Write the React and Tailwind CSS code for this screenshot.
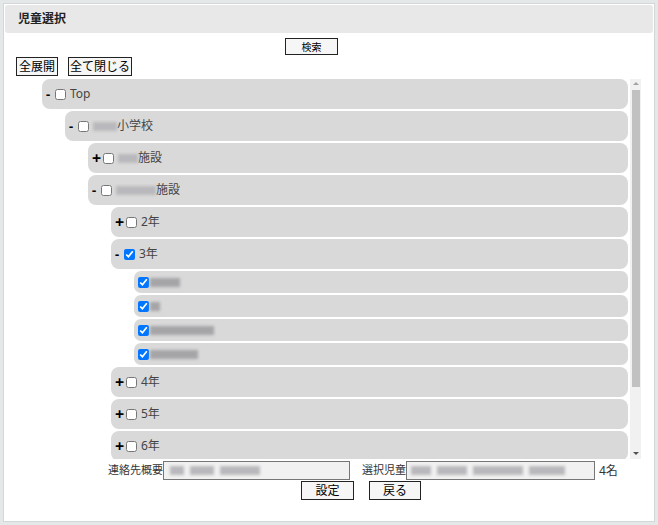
import React, { useState } from 'react'

const font = { fontFamily: '"Noto Sans", "Noto Sans CJK JP", sans-serif' }

// blurred name placeholder
const Blur = ({ w, dark }) => (
  <span className={`inline-block h-[9px] blur-[1.5px] ${dark ? 'bg-[#a5a5a8]' : 'bg-[#b9b9bd]'}`} style={{ width: w }} />
)

const tree = {
  label: 'Top', open: true, children: [
    { label: '小学校', blur: 24, open: true, children: [
      { label: '施設', blur: 20, open: false, children: [] },
      { label: '施設', blur: 40, open: true, children: [
        { label: '2年', open: false, children: [] },
        { label: '3年', open: true, checked: true, leaves: [30, 10, 64, 48] },
        { label: '4年', open: false, children: [] },
        { label: '5年', open: false, children: [] },
        { label: '6年', open: false, children: [] },
      ] },
    ] },
    { label: '中学校', blur: 24, open: false, children: [] },
    { label: '中学校', blur: 30, open: false, children: [] },
  ]
}

const Node = ({ node }) => {
  const [checked, setChecked] = useState(!!node.checked)
  return (
    <div>
      <div className="h-[30px] mb-[2px] bg-[#d9d9d9] rounded-[8px] flex items-center pl-[4px] text-[12px] text-[#444]">
        {node.open
          ? <span className="font-bold text-black text-[13px] w-[9px] leading-none">-</span>
          : <span className="font-bold text-black text-[16px] w-[11px] leading-none">+</span>}
        <input type="checkbox" checked={checked} onChange={() => setChecked(!checked)} className="w-[11px] h-[11px] m-0 mr-[4px]" />
        {node.blur && <Blur w={node.blur} />}
        <span>{node.label}</span>
      </div>
      {node.open && node.children && node.children.length > 0 && (
        <div className="ml-[23px]">
          {node.children.map((c, i) => <Node key={i} node={c} />)}
        </div>
      )}
      {node.open && node.leaves && (
        <div className="ml-[23px]">
          {node.leaves.map((w, i) => (
            <div key={i} className="h-[22px] mb-[2px] bg-[#d9d9d9] rounded-[7px] flex items-center pl-[4px]">
              <input type="checkbox" defaultChecked className="w-[11px] h-[11px] m-0 mr-[1px]" />
              <Blur w={w} dark />
            </div>
          ))}
        </div>
      )}
    </div>
  )
}

const Btn = ({ children, className }) => (
  <button className={`border border-[#222] bg-[#f6f6f6] text-black leading-none flex items-center justify-center ${className}`}>{children}</button>
)

export default function App() {
  return (
    <div className="w-[658px] h-[525px] bg-[#e4e8e9] p-[3px]" style={font}>
      <div className="h-full bg-white border border-[#d3d7d8] flex flex-col">
        <div className="mx-[1px] mt-[1px] h-[28px] bg-[#e8e8e8] rounded-[3px] flex items-center pl-[13px] text-[12px] font-bold text-[#222]">
          児童選択
        </div>
        <div className="mt-[5px] ml-[281px] flex">
          <Btn className="w-[53px] h-[17px] text-[10px]">検索</Btn>
        </div>
        <div className="mt-[2px] ml-[12px] flex gap-[10px]">
          <Btn className="w-[42px] h-[19px] text-[12px]">全展開</Btn>
          <Btn className="w-[64px] h-[19px] text-[12px]">全て閉じる</Btn>
        </div>
        <div className="mt-[3px] ml-[38px] flex gap-[2px] h-[380px]">
          <div className="w-[586px] h-full overflow-hidden">
            <Node node={tree} />
          </div>
          <div className="w-[11px] h-full bg-[#f1f1f1] flex flex-col items-center">
            <span className="mt-[3px] w-0 h-0 border-x-[3px] border-x-transparent border-b-[3px] border-b-[#a3a3a3]" />
            <div className="mt-[5px] w-[8px] h-[297px] bg-[#c1c1c1]" />
            <span className="mt-auto mb-[4px] w-0 h-0 border-x-[3px] border-x-transparent border-t-[3px] border-t-[#505050]" />
          </div>
        </div>
        <div className="mt-[2px] flex items-center text-[11px] text-[#333]">
          <span className="ml-[104px]">連絡先概要</span>
          <div className="w-[187px] h-[19px] border border-[#767676] bg-[#f1f1f1] flex items-center pl-[6px] gap-[6px]">
            <Blur w={14} /><Blur w={24} /><Blur w={40} />
          </div>
          <span className="ml-[12px]">選択児童</span>
          <div className="w-[189px] h-[19px] border border-[#767676] bg-[#f1f1f1] flex items-center pl-[4px] gap-[6px]">
            <Blur w={20} /><Blur w={30} /><Blur w={50} /><Blur w={36} />
          </div>
          <span className="ml-[4px] text-[12px]">4名</span>
        </div>
        <div className="mt-[1px] flex">
          <Btn className="ml-[297px] w-[53px] h-[19px] text-[12px]">設定</Btn>
          <Btn className="ml-[15px] w-[52px] h-[19px] text-[12px]">戻る</Btn>
        </div>
      </div>
    </div>
  )
}
